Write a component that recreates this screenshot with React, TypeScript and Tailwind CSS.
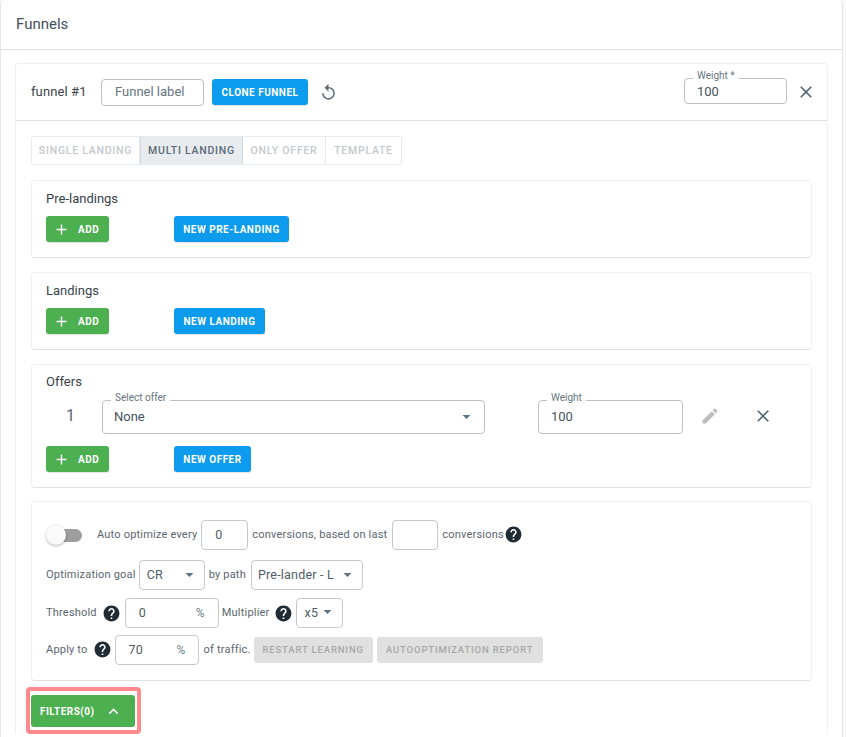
import type { ReactNode } from 'react';

const ICONS = {
  add: 'M19 13h-6v6h-2v-6H5v-2h6V5h2v6h6v2z',
  close: 'M19 6.41L17.59 5 12 10.59 6.41 5 5 6.41 10.59 12 5 17.59 6.41 19 12 13.41 17.59 19 19 17.59 13.41 12z',
  edit: 'M3 17.25V21h3.75L17.81 9.94l-3.75-3.75L3 17.25zM20.71 7.04c.39-.39.39-1.02 0-1.41l-2.34-2.34c-.39-.39-1.02-.39-1.41 0l-1.83 1.83 3.75 3.75 1.83-1.83z',
  replay: 'M12 5V1L7 6l5 5V7c3.31 0 6 2.69 6 6s-2.69 6-6 6-6-2.69-6-6H4c0 4.42 3.58 8 8 8s8-3.58 8-8-3.58-8-8-8z',
  help: 'M12 2C6.48 2 2 6.48 2 12s4.48 10 10 10 10-4.48 10-10S17.52 2 12 2zm1 17h-2v-2h2v2zm2.07-7.75l-.9.92C13.45 12.9 13 13.5 13 15h-2v-.5c0-1.1.45-2.1 1.17-2.83l1.24-1.26c.37-.36.59-.86.59-1.41 0-1.1-.9-2-2-2s-2 .9-2 2H8c0-2.21 1.79-4 4-4s4 1.79 4 4c0 .88-.36 1.68-.93 2.25z',
  up: 'M12 8l-6 6 1.41 1.41L12 10.83l4.59 4.58L18 14z',
  caret: 'M7 10l5 5 5-5z',
};

function Icon({ name, className }: { name: keyof typeof ICONS; className: string }) {
  return (
    <svg viewBox="0 0 24 24" fill="currentColor" className={`shrink-0 ${className}`}>
      <path d={ICONS[name]} />
    </svg>
  );
}

function Help({ className = '' }: { className?: string }) {
  return <Icon name="help" className={`w-[19px] h-[19px] text-[#212b33] ${className}`} />;
}

function Btn({ children, className }: { children: ReactNode; className: string }) {
  return (
    <div className={`h-[26px] flex items-center rounded-[3px] text-[10px] font-bold tracking-[0.5px] text-white shadow-[0_1px_1px_rgba(0,0,0,0.12)] ${className}`}>
      {children}
    </div>
  );
}

function ActionRow({ label, width }: { label: string; width: string }) {
  return (
    <div className="flex gap-[65px]">
      <Btn className="w-[63px] bg-[#4caf50] pl-[7px]">
        <Icon name="add" className="w-[17px] h-[17px] mr-[8px]" />
        ADD
      </Btn>
      <Btn className={`justify-center bg-[#0d9bee] ${width}`}>{label}</Btn>
    </div>
  );
}

function Section({ title, label, width, className = '' }: { title: string; label: string; width: string; className?: string }) {
  return (
    <div className={`h-[78px] rounded-[4px] border border-[#f0f1f2] border-b-[#dfe1e3] px-[14px] pt-[10px] ${className}`}>
      <div className="text-[13px] leading-[16px] text-[#37424a] mb-[9px]">{title}</div>
      <ActionRow label={label} width={width} />
    </div>
  );
}

function Notched({ label, value, className, children, legendClass }: { label: string; value: string; className: string; children?: ReactNode; legendClass: string }) {
  return (
    <fieldset className={`border border-[#bdc1c4] rounded-[4px] flex items-center ${className}`}>
      <legend className={`text-[10px] leading-[8px] px-[4px] pb-[5px] text-[#66757f] ${legendClass}`}>{label}</legend>
      <div className="flex-1 flex items-center justify-between text-[13px] text-[#44525b] leading-[16px]">
        <span>{value}</span>
        {children}
      </div>
    </fieldset>
  );
}

function Box({ className, children }: { className: string; children?: ReactNode }) {
  return (
    <div className={`h-[30px] shrink-0 border border-[#c6c9cc] rounded-[4px] flex items-center text-[12.5px] text-[#505c64] ${className}`}>
      {children}
    </div>
  );
}

function Caret({ className = '' }: { className?: string }) {
  return <Icon name="caret" className={`w-[19px] h-[19px] text-[#5f7482] -mt-[2px] ${className}`} />;
}

function Disabled({ children, className }: { children: ReactNode; className: string }) {
  return (
    <div className={`h-[26px] shrink-0 flex items-center justify-center rounded-[3px] bg-[#e0e0e0] text-[9.5px] font-medium tracking-[0.85px] text-[#a8a8a8] ${className}`}>
      {children}
    </div>
  );
}

export default function App() {
  const tabs = [
    { t: 'SINGLE LANDING', w: 'w-[108px]' },
    { t: 'MULTI LANDING', w: 'w-[103px]', on: true },
    { t: 'ONLY OFFER', w: 'w-[83px]' },
    { t: 'TEMPLATE', w: 'w-[75px]' },
  ];

  return (
    <div className="h-[737px] overflow-hidden bg-[#fafafa] font-['Roboto',sans-serif] text-[#37424a]">
      <div className="w-[843px] h-[737px] bg-white rounded-t-[4px] border-x border-[#e4e5e6] overflow-hidden">
        <div className="h-[50px] border-b border-[#dfe1e3] pl-[15px] pt-[15px] text-[15px] leading-[18px] text-[#44505a]">
          Funnels
        </div>

        <div className="mx-[14px] mt-[13px] w-[813px] rounded-t-[4px] border-x border-t border-[#eff0f1]">
          <div className="h-[57px] border-b border-[#dfe1e3] flex items-center pl-[15px] pr-[11px]">
            <div className="text-[13px] tracking-[0.1px] w-[70px] text-[#37424a]">funnel #1</div>
            <div className="w-[103px] h-[27px] border border-[#bdc1c4] rounded-[4px] flex items-center pl-[13px] text-[13px] text-[#66757f]">
              Funnel label
            </div>
            <Btn className="justify-center ml-[8px] w-[96px] bg-[#0d9bee]">CLONE FUNNEL</Btn>
            <Icon name="replay" className="ml-[11px] mt-[1px] w-[19px] h-[19px] text-[#5d707d]" />
            <div className="ml-auto flex items-center">
              <Notched label="Weight *" value="100" className="w-[103px] h-[32px] pl-[12px] pb-[5px] -mt-[8px]" legendClass="-ml-[4px]" />
              <Icon name="close" className="ml-[9px] w-[20px] h-[20px] text-[#53697a]" />
            </div>
          </div>

          <div className="px-[15px] pt-[15px]">
            <div className="flex w-fit h-[29px] border border-[#e7e9ea] rounded-[3px] mb-[15px]">
              {tabs.map((tab, i) => (
                <div
                  key={tab.t}
                  className={`${tab.w} flex items-center justify-center text-[10.5px] font-medium tracking-[0.75px] ${i < 3 ? 'border-r border-[#e7e9ea]' : ''} ${tab.on ? 'bg-[#e9ecef] text-[#5a6b78] border-l border-l-[#d5d9dc] border-r-[#d5d9dc]' : 'text-[#c3c9cd]'}`}
                >
                  {tab.t}
                </div>
              ))}
            </div>

            <Section title="Pre-landings" label="NEW PRE-LANDING" width="w-[115px]" />
            <Section title="Landings" label="NEW LANDING" width="w-[91px]" className="mt-[14px]" />

            <div className="mt-[14px] h-[124px] rounded-[4px] border border-[#f0f1f2] border-b-[#dfe1e3] px-[14px] pt-[9px]">
              <div className="text-[13px] leading-[16px] text-[#37424a]">Offers</div>
              <div className="flex items-start mt-[4px] h-[52px]">
                <div className="w-[56px] pl-[20px] pt-[12px] text-[16px] leading-[20px] text-[#5a6670]">1</div>
                <Notched label="Select offer" value="None" className="w-[383px] h-[40px] pl-[11px] pr-[8px] pb-[6px]" legendClass="-ml-[3px]">
                  <Caret />
                </Notched>
                <Notched label="Weight" value="100" className="ml-[53px] w-[145px] h-[40px] pl-[12px] pb-[6px]" legendClass="-ml-[4px]" />
                <Icon name="edit" className="ml-[17px] mt-[12px] w-[20px] h-[20px] text-[#bdbdbd]" />
                <Icon name="close" className="ml-[33px] mt-[12px] w-[20px] h-[20px] text-[#53697a]" />
              </div>
              <ActionRow label="NEW OFFER" width="w-[77px]" />
            </div>

            <div className="mt-[13px] h-[180px] rounded-[4px] border border-[#f0f1f2] border-b-[#dfe1e3] px-[14px] pt-[18px] text-[11px] tracking-[0.2px] text-[#5a6670]">
              <div className="flex items-center h-[30px]">
                <div className="relative w-[36px] h-[20px] shrink-0">
                  <div className="absolute left-[2px] top-[4px] w-[34px] h-[13px] rounded-full bg-[#9e9e9e]" />
                  <div className="absolute left-0 top-0 w-[20px] h-[20px] rounded-full bg-[#fafafa] shadow-[0_1px_3px_rgba(0,0,0,0.3)]" />
                </div>
                <span className="ml-[15px]">Auto optimize every</span>
                <Box className="w-[47px] ml-[4px] pl-[13px]">0</Box>
                <span className="ml-[4px]">conversions, based on last</span>
                <Box className="w-[46px] ml-[5px]" />
                <span className="ml-[4px]">conversions</span>
                <Help className="-mt-[2px]" />
              </div>
              <div className="flex items-center h-[30px] mt-[10px]">
                <span>Optimization goal</span>
                <Box className="w-[66px] ml-[3px] pl-[7px] pr-[5px] justify-between">
                  CR <Caret />
                </Box>
                <span className="ml-[4px]">by path</span>
                <Box className="w-[112px] ml-[5px] pl-[6px] pr-[5px] justify-between">
                  Pre-lander - L <Caret />
                </Box>
              </div>
              <div className="flex items-center h-[30px] mt-[8px]">
                <span>Threshold</span>
                <Help className="ml-[5px]" />
                <Box className="w-[94px] ml-[4px] pl-[13px] pr-[13px] justify-between">
                  0 <span className="text-[#6c7f8c] text-[12px]">%</span>
                </Box>
                <span className="ml-[3px]">Multiplier</span>
                <Help className="ml-[5px]" />
                <Box className="w-[47px] ml-[3px] pl-[7px] pr-[5px] justify-between">
                  x5 <Caret className="-mt-[4px]" />
                </Box>
              </div>
              <div className="flex items-center h-[30px] mt-[7px]">
                <span>Apply to</span>
                <Help className="ml-[5px] -mt-[1px]" />
                <Box className="w-[84px] ml-[3px] pl-[13px] pr-[12px] justify-between">
                  70 <span className="text-[#6c7f8c] text-[12px]">%</span>
                </Box>
                <span className="ml-[5px]">of traffic.</span>
                <Disabled className="w-[119px] ml-[3px]">RESTART LEARNING</Disabled>
                <Disabled className="w-[166px] ml-[4px]">AUTOOPTIMIZATION REPORT</Disabled>
              </div>
            </div>

            <div className="w-[115px] h-[47px] mt-[6px] -ml-[5px] rounded-[4px] border-[4px] border-[#ff8a8e] pl-[1px] pr-[2px] pt-[4px]">
              <div className="h-[32px] rounded-[3px] bg-[#4caf50] text-white text-[10px] font-bold tracking-[0.45px] flex items-center pl-[9px]">
                FILTERS(0)
                <Icon name="up" className="ml-[10px] w-[19px] h-[19px]" />
              </div>
            </div>
          </div>
        </div>
      </div>
    </div>
  );
}
